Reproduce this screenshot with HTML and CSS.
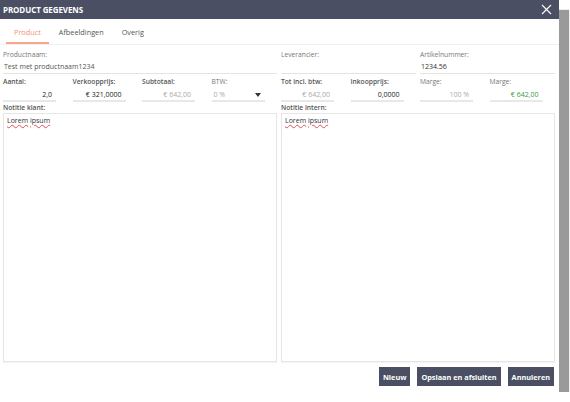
FILE: index.html
```html
<!DOCTYPE html>
<html>
<head>
  <meta charset="UTF-8">
  <title>Product gegevens</title>
  <link rel="stylesheet" href="styles.css">
</head>
<body>
  <div class="dialog">
    <!-- Kop -->
    <div class="dialog-header">
      <span class="dialog-title">PRODUCT GEGEVENS</span>
      <svg class="close" width="11" height="11" viewBox="0 0 11 11">
        <path d="M1 1 L10 10 M10 1 L1 10" stroke="#fff" stroke-width="1.1" fill="none"/>
      </svg>
    </div>

    <!-- Tabs -->
    <div class="tabs">
      <div class="tab active">Product</div>
      <div class="tab">Afbeeldingen</div>
      <div class="tab">Overig</div>
    </div>

    <!-- Formulier -->
    <div class="form-body">
      <div class="field span-4">
        <label>Productnaam:</label>
        <div class="input wide">Test met productnaam1234</div>
      </div>
      <div class="field span-2">
        <label>Leverancier:</label>
        <div class="input wide"></div>
      </div>
      <div class="field span-2">
        <label>Artikelnummer:</label>
        <div class="input wide dark">1234.56</div>
      </div>

      <div class="field">
        <label class="bold">Aantal:</label>
        <div class="input num">2,0</div>
      </div>
      <div class="field">
        <label class="bold">Verkoopprijs:</label>
        <div class="input num">€ 321,0000</div>
      </div>
      <div class="field">
        <label class="bold">Subtotaal:</label>
        <div class="input num muted">€ 642,00</div>
      </div>
      <div class="field">
        <label>BTW:</label>
        <div class="input select muted">0 %<span class="caret"></span></div>
      </div>
      <div class="field">
        <label class="bold">Tot incl. btw:</label>
        <div class="input num muted">€ 642,00</div>
      </div>
      <div class="field">
        <label class="bold">Inkoopprijs:</label>
        <div class="input num">0,0000</div>
      </div>
      <div class="field">
        <label>Marge:</label>
        <div class="input num muted">100 %</div>
      </div>
      <div class="field">
        <label>Marge:</label>
        <div class="input num green">€ 642,00</div>
      </div>

      <div class="field span-4">
        <label class="bold">Notitie klant:</label>
        <div class="textarea"><span class="spell">Lorem</span> <span class="spell">ipsum</span></div>
      </div>
      <div class="field span-4">
        <label class="bold">Notitie intern:</label>
        <div class="textarea"><span class="spell">Lorem</span> <span class="spell">ipsum</span></div>
      </div>
    </div>

    <!-- Knoppen -->
    <div class="dialog-footer">
      <button class="btn">Nieuw</button>
      <button class="btn">Opslaan en afsluiten</button>
      <button class="btn">Annuleren</button>
    </div>
  </div>
</body>
</html>
```

FILE: styles.css
```css
/* Kleuren */
:root {
  --header-color: #4b4f63;
  --accent-color: #f4906f;
  --label-color: #666;
  --text-color: #444;
  --muted-color: #aaa;
  --line-color: #e4e4e4;
}
body {
  margin: 0;
  padding: 0;
  background: #fff;
  font-family: 'Open Sans', 'Noto Sans', sans-serif;
  color: var(--text-color);
}
/* Venster */
.dialog {
  width: 559px;
  height: 392px;
  background: #fff;
  box-shadow: 10px 10px 1px #9a9a9a;
  display: flex;
  flex-direction: column;
}
.dialog-header {
  height: 19px;
  flex-shrink: 0;
  background: var(--header-color);
  display: flex;
  align-items: center;
  justify-content: space-between;
  padding: 0 7px 0 3px;
}
.dialog-title {
  color: #fff;
  font-weight: 700;
  font-size: 8px;
  letter-spacing: -0.1px;
}
/* Tabs */
.tabs {
  display: flex;
  flex-shrink: 0;
  padding: 7px 0 0 6px;
  border-bottom: 1px solid #eef3f2;
  height: 18px;
}
.tab {
  font-size: 7.3px;
  color: #555;
  padding: 0 8px;
  margin-right: 2px;
  height: 16px;
  line-height: 13px;
}
.tab.active {
  color: var(--accent-color);
  border-bottom: 2px solid #f7a68d;
}
/* Formulier */
.form-body {
  flex: 1;
  display: grid;
  grid-template-columns: repeat(8, 1fr);
  grid-template-rows: auto auto 1fr;
  column-gap: 4px;
  padding: 5px 4px 0 3px;
}
.field {
  display: flex;
  flex-direction: column;
}
.span-4 { grid-column: span 4; }
.span-2 { grid-column: span 2; }
label {
  font-size: 6.7px;
  color: #777;
  height: 10px;
  line-height: 10px;
}
label.bold {
  color: #555;
  font-weight: 600;
}
.input {
  font-size: 7px;
  height: 12px;
  line-height: 12px;
  border-bottom: 1px solid var(--line-color);
  margin-top: 1px;
  margin-bottom: 3px;
  color: #555;
}
.input.wide {
  padding-left: 1px;
}
.input.dark { color: #333; }
.input.num, .input.select {
  width: 49px;
  height: 11px;
  line-height: 11px;
  text-align: right;
  padding-right: 4px;
  border-bottom: 2px solid #e8e8e8;
  margin-top: 2px;
  margin-bottom: 1px;
  color: #222;
}
.input.select {
  text-align: left;
  padding-left: 2px;
  padding-right: 0;
  width: 51px;
  position: relative;
}
.muted { color: var(--muted-color) !important; }
.green { color: #3b9a3b !important; }
.caret {
  position: absolute;
  right: 4px;
  top: 4px;
  border-left: 3px solid transparent;
  border-right: 3px solid transparent;
  border-top: 4px solid #333;
}
/* Notities */
.textarea {
  flex: 1;
  border: 1px solid #e6e6e6;
  box-shadow: 0 1px 1px rgba(0,0,0,0.04);
  font-size: 7px;
  color: #333;
  padding: 2px 3px;
  margin-top: 0;
}
.spell {
  text-decoration: underline wavy #e05050;
  text-decoration-thickness: 0.6px;
}
/* Knoppen */
.dialog-footer {
  display: flex;
  flex-shrink: 0;
  justify-content: flex-end;
  gap: 7px;
  padding: 5px 5px 6px;
}
.btn {
  background: var(--header-color);
  color: #fff;
  border: none;
  font-family: inherit;
  font-weight: 700;
  font-size: 7.3px;
  height: 19px;
  padding: 0 4px;
  cursor: pointer;
}
```
